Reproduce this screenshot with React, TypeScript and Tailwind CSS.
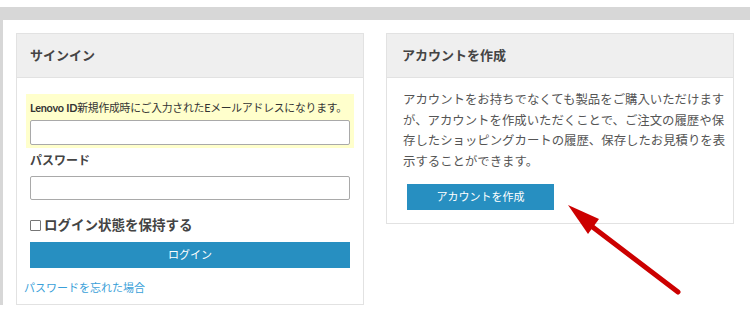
const FONT = "font-['Lato','Noto_Sans_CJK_JP',sans-serif]";

export default function App() {
  return (
    <div className={`relative h-[312px] w-[750px] overflow-hidden bg-white ${FONT}`}>
      <div className="h-[7px] bg-white" />
      <div className="h-[13px] bg-[#d7d7d7]" />
      <div className="flex">
        <div className="w-[3px] self-stretch bg-[#d7d7d7]" />
        <div className="flex items-start gap-[22px] pl-[13px] pt-[13px]">
          {/* sign in */}
          <section className="w-[348px] border border-[#e2e2e2] bg-white">
            <header className="flex h-[44px] items-center border-b border-[#e2e2e2] bg-[#efefef] px-[13px]">
              <h2 className="text-[13px] font-bold text-[#444]">サインイン</h2>
            </header>
            <div className="px-[9px] pb-[8px] pt-[16px]">
              <div className="bg-[#ffffcc] px-[4px] pb-[3px] pt-[5px]">
                <p className="whitespace-nowrap text-[10.8px] leading-[18px] tracking-[-0.2px] text-[#333]">
                  <span className="font-bold">Lenovo ID</span>新規作成時にご入力されたEメールアドレスになります。
                </p>
                <input
                  className="mt-[3px] block h-[25px] w-full rounded-[2px] border border-[#a9a9a9] bg-white"
                  type="text"
                />
              </div>
              <div className="px-[4px]">
                <label className="mt-[4px] block text-[12px] font-bold leading-[18px] text-[#444]">パスワード</label>
                <input
                  className="mt-[6px] block h-[24px] w-full rounded-[2px] border border-[#a9a9a9] bg-white"
                  type="password"
                />
                <div className="mt-[16px] flex h-[18px] items-center gap-[3px]">
                  <span className="block h-[11px] w-[11px] rounded-[1px] border border-[#767676] bg-white" />
                  <span className="text-[13.5px] font-bold text-[#444]">ログイン状態を保持する</span>
                </div>
                <button className="mt-[8px] flex h-[26px] w-full items-center justify-center bg-[#278fc1] text-[11px] text-white">
                  ログイン
                </button>
              </div>
              <a className="ml-[-2px] mt-[12px] block text-[11px] leading-[16px] text-[#3a9fd9]">
                パスワードを忘れた場合
              </a>
            </div>
          </section>

          {/* create account */}
          <section className="w-[348px] border border-[#e2e2e2] bg-white">
            <header className="flex h-[44px] items-center border-b border-[#e2e2e2] bg-[#efefef] px-[15px]">
              <h2 className="text-[13px] font-bold text-[#444]">アカウントを作成</h2>
            </header>
            <div className="pb-[13px] pl-[16px] pt-[12px]">
              <p className="w-[324px] text-[12.4px] leading-[20.5px] text-[#555]">
                アカウントをお持ちでなくても製品をご購入いただけますが、アカウントを作成いただくことで、ご注文の履歴や保存したショッピングカートの履歴、保存したお見積りを表示することができます。
              </p>
              <button className="ml-[4px] mt-[12px] flex h-[26px] w-[147px] items-center justify-center bg-[#278fc1] text-[11px] text-white">
                アカウントを作成
              </button>
            </div>
          </section>
        </div>
      </div>

      {/* annotation arrow */}
      <svg className="absolute left-[560px] top-[195px]" width="130" height="110" viewBox="0 0 130 110">
        <line x1="30" y1="30" x2="118" y2="97" stroke="#cc0000" strokeWidth="5" strokeLinecap="round" />
        <polygon points="8,10 39,24 28,39" fill="#cc0000" />
      </svg>
    </div>
  );
}
